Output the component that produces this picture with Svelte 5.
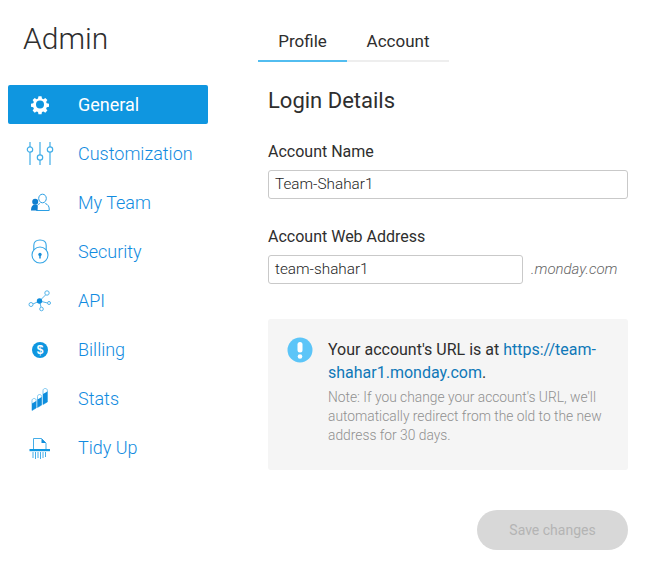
<script>
  const nav = ['General','Customization','My Team','Security','API','Billing','Stats','Tidy Up'];
</script>

<div class="page">
  <aside class="side">
    <h1>Admin</h1>
    <nav>
      {#each nav as label, i}
        <div class="item" class:active={i === 0}>
          <span class="ico">
            {#if i === 0}
              <svg width="24" height="24" viewBox="0 0 24 24">
                <path fill="#fff" d="M10.3 3h3.4l.5 2.5 1.6.7 2.1-1.4 2.3 2.3-1.4 2.1.7 1.6 2.5.5v3.4l-2.5.5-.7 1.6 1.4 2.1-2.3 2.3-2.1-1.4-1.6.7-.5 2.5h-3.4l-.5-2.5-1.6-.7-2.1 1.400-2.300-2.300 1.400-2.100-.7-1.600-2.500-.5v-3.400l2.500-.5.7-1.600-1.400-2.100 2.300-2.300 2.100 1.400 1.600-.7z" transform="translate(1.200 .6) scale(.9)"/>
                <circle cx="12" cy="11.400" r="4" fill="#0f96e0"/>
              </svg>
            {:else if i === 1}
              <svg width="28" height="26" viewBox="0 0 28 26" fill="none" stroke="#42aee8" stroke-width="1.200">
                <path d="M4 1v5M4 11v13M14 1v13M14 19v5M24 1v5M24 11v13"/>
                <circle cx="4" cy="8.500" r="2.700"/><circle cx="14" cy="16.500" r="2.700"/><circle cx="24" cy="8.500" r="2.700"/>
              </svg>
            {:else if i === 2}
              <svg width="20" height="20" viewBox="0 0 20 20">
                <path fill="none" stroke="#2b9fe4" stroke-width="1" d="M12.500 1.200c2.300 0 3.800 1.900 3.800 4.200s-1.500 4.400-3.800 4.400-3.800-2.100-3.800-4.400 1.500-4.200 3.800-4.200zM9.800 10.500c-2 .8-3.300 2.600-3.300 4.500v2.500h12.700V16c0-2.600-1.300-4.600-3.900-5.500"/>
                <circle cx="5.200" cy="8.800" r="3" fill="#0f7fd0"/>
                <path fill="#0f7fd0" d="M1 17c0-3.500 1.600-5.500 4.200-5.500S8 13 7.500 17.500H1z"/>
              </svg>
            {:else if i === 3}
              <svg width="20" height="26" viewBox="0 0 20 26" fill="none" stroke="#35a6e6" stroke-width="1.100">
                <circle cx="10" cy="16" r="8"/>
                <path d="M3.800 11V6.500C3.800 3 6 1 10 1s6.200 2 6.200 5.500V11"/>
                <circle cx="10" cy="15.500" r="1.700" fill="#1b8fd8" stroke="none"/>
                <path d="M10 15.500v4" stroke="#1b8fd8" stroke-width="1.500"/>
              </svg>
            {:else if i === 4}
              <svg width="24" height="24" viewBox="0 0 24 24" fill="none" stroke="#55b4ea" stroke-width="1">
                <path d="M11.500 12L17.500 6M11.500 12L5 15M11.500 12L19.500 14M11.500 12L13 18"/>
                <circle cx="19" cy="4" r="2.200" fill="#fff"/><circle cx="3" cy="15.500" r="2" fill="#fff"/>
                <circle cx="21" cy="14" r="1.500" fill="#fff"/><circle cx="13.500" cy="20" r="1.800" fill="#fff"/>
                <circle cx="11.500" cy="12" r="2.700" fill="#0f8ddc" stroke="none"/>
              </svg>
            {:else if i === 5}
              <svg width="18" height="18" viewBox="0 0 18 18">
                <circle cx="9" cy="9" r="8" fill="#0f96e0"/>
                <text x="9" y="13.200" text-anchor="middle" class="dollar">$</text>
              </svg>
            {:else if i === 6}
              <svg width="18" height="24" viewBox="0 0 18 24">
                <path fill="#fff" stroke="#6cc0ee" stroke-width=".9" d="M1 13.500c0-1.200 1-2 2.200-2s2 .8 2 2V21L1 23.500zM6.500 9.500c0-1.200 1-2 2-2s2.200.8 2.200 2V18l-4.200 2.500zM12 3.500c0-1.200 1-2 2.200-2s2.200.8 2.200 2V15L12 17.500z"/>
                <path fill="#0f8ddc" d="M1 16.500l4.200-2.500V21L1 23.500zM6.500 12.500l4.200-2.500V18l-4.200 2.500zM12 7l4.400-2.500V15L12 17.500z"/>
              </svg>
            {:else}
              <svg width="22" height="24" viewBox="0 0 22 24" fill="none">
                <path stroke="#45ade8" stroke-width="1" d="M4.500 13V2.500h8l4.500 4.500v6"/>
                <path fill="#0f8ddc" d="M12.500 2.500l4.500 4.500h-4.500z"/>
                <rect x="0" y="13" width="20.500" height="2.200" fill="#0f96e0" transform="translate(.5 0)"/>
                <path stroke="#45ade8" stroke-width="1" d="M4 16v6M6.500 16v7M9 16v6M11.500 16v7M14 16v6M16.500 16v5"/>
              </svg>
            {/if}
          </span>
          <span class="label">{label}</span>
        </div>
      {/each}
    </nav>
  </aside>

  <main>
    <div class="tabs">
      <div class="tab on">Profile</div>
      <div class="tab">Account</div>
    </div>
    <section>
      <h2>Login Details</h2>
      <div class="lbl">Account Name</div>
      <div class="field">Team-Shahar1</div>
      <div class="lbl second">Account Web Address</div>
      <div class="row">
        <div class="field short">team-shahar1</div>
        <span class="suffix">.monday.com</span>
      </div>
      <div class="info">
        <svg class="alert" width="26" height="26" viewBox="0 0 26 26">
          <circle cx="13" cy="13" r="12.500" fill="#5cc5f8"/>
          <rect x="10.500" y="5" width="5" height="10.500" rx="2.500" fill="#fff"/>
          <circle cx="13" cy="19.500" r="2.300" fill="#fff"/>
        </svg>
        <div>
          <p class="main-msg">Your account's URL is at <a href="#top">https://team-shahar1.monday.com</a>.</p>
          <p class="note">Note: If you change your account's URL, we'll automatically redirect from the old to the new address for 30 days.</p>
        </div>
      </div>
      <div class="actions"><button disabled>Save changes</button></div>
    </section>
  </main>
</div>

<style>
  :global(body) { margin: 0; background: #fff; }
  .page { display: flex; width: 652px; height: 569px; overflow: hidden; font-family: Roboto, sans-serif; }
  .side { width: 258px; flex: none; padding-top: 20px; box-sizing: border-box; }
  h1 { margin: 0 0 27px 23px; font-size: 30px; line-height: 38px; font-weight: 300; color: #2e2e2e; }
  nav { display: flex; flex-direction: column; gap: 10px; margin-left: 8px; width: 200px; }
  .item { display: flex; align-items: center; height: 39px; border-radius: 2px; color: #118be0; font-size: 18px; font-weight: 300; }
  .item.active { background: #0f96e0; color: #fff; font-weight: 400; }
  .ico { width: 64px; margin-right: 6px; display: flex; justify-content: center; flex: none; }
  .dollar { font: 700 12px "Liberation Sans", sans-serif; fill: #fff; }
  main { flex: 1; padding-top: 26px; }
  .tabs { display: flex; width: 191px; height: 34px; border-bottom: 2px solid #eee; }
  .tab { width: 89px; height: 34px; text-align: center; font-size: 17px; line-height: 30px; color: #2e2e2e; }
  .tab + .tab { width: 102px; }
  .tab.on { border-bottom: 2px solid #52bdf0; }
  section { padding: 0 24px 0 10px; }
  h2 { margin: 25px 0 0; font-size: 22px; line-height: 28px; font-weight: 400; color: #2e2e2e; }
  .lbl { margin-top: 27px; font-size: 16px; line-height: 19px; color: #2e2e2e; }
  .second { margin-top: 28px; }
  .field { margin-top: 9px; height: 29px; box-sizing: border-box; border: 1px solid #c9c9c9; border-radius: 3px; padding-left: 6px; font-size: 15.300px; font-weight: 300; line-height: 26px; color: #1e1e1e; }
  .row { display: flex; align-items: flex-end; }
  .short { width: 255px; }
  .suffix { margin-left: 8px; font-size: 15px; font-weight: 300; font-style: italic; color: #666; line-height: 29px; }
  .info { display: flex; margin-top: 35px; height: 151px; box-sizing: border-box; padding: 18px 20px 0 19px; background: #f5f5f5; border-radius: 3px; gap: 15px; }
  .alert { flex: none; }
  p { margin: 0; }
  .main-msg { font-size: 16px; line-height: 22.500px; color: #2e2e2e; margin-top: 2px; }
  a { color: #0f78b8; text-decoration: none; }
  .note { margin-top: 4px; font-size: 13.800px; line-height: 19px; font-weight: 300; color: #909090; }
  .actions { display: flex; justify-content: flex-end; margin-top: 40px; }
  button { width: 151px; height: 40px; border: 0; border-radius: 20px; background: #d8d8d8; color: #b4b4b4; font: 400 14px Roboto, sans-serif; }
</style>
